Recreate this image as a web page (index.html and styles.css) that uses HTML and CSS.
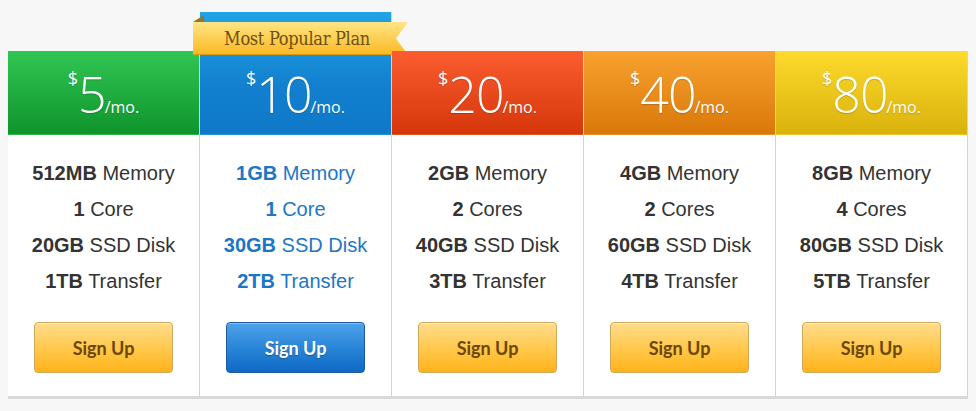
FILE: index.html
```html
<!DOCTYPE html>
<html lang="en">
<head>
  <meta charset="UTF-8" />
  <title>Plans</title>
  <link rel="stylesheet" href="styles.css">
</head>
<body>
  <div class="pricing">
    <div class="plan plan-green">
      <div class="plan-head">
        <span class="price"><span class="cur">$</span><span class="amount">5</span><span class="per">/mo.</span></span>
      </div>
      <ul class="plan-features">
        <li><b>512MB</b> Memory</li>
        <li><b>1</b> Core</li>
        <li><b>20GB</b> SSD Disk</li>
        <li><b>1TB</b> Transfer</li>
      </ul>
      <div class="plan-foot"><a class="btn" href="#">Sign Up</a></div>
    </div>

    <div class="plan plan-blue popular">
      <div class="ribbon">
        <svg class="ribbon-shape" width="216" height="42" viewBox="0 0 216 42">
          <defs>
            <linearGradient id="ribbon-fill" x1="0" y1="0" x2="0" y2="1">
              <stop offset="0" stop-color="#ffe585" />
              <stop offset="1" stop-color="#fbb820" />
            </linearGradient>
          </defs>
          <polygon points="0,8 11,1 11,8" fill="#94762a" />
          <polygon points="0,8 215,8 203,24.5 215,41 0,41" fill="url(#ribbon-fill)" />
          <polyline points="0,40.5 215,40.5" stroke="#d99c14" stroke-width="1" />
        </svg>
        <span class="ribbon-text">Most Popular Plan</span>
      </div>
      <div class="plan-head">
        <span class="price"><span class="cur">$</span><span class="amount">10</span><span class="per">/mo.</span></span>
      </div>
      <ul class="plan-features">
        <li><b>1GB</b> Memory</li>
        <li><b>1</b> Core</li>
        <li><b>30GB</b> SSD Disk</li>
        <li><b>2TB</b> Transfer</li>
      </ul>
      <div class="plan-foot"><a class="btn btn-blue" href="#">Sign Up</a></div>
    </div>

    <div class="plan plan-red">
      <div class="plan-head">
        <span class="price"><span class="cur">$</span><span class="amount">20</span><span class="per">/mo.</span></span>
      </div>
      <ul class="plan-features">
        <li><b>2GB</b> Memory</li>
        <li><b>2</b> Cores</li>
        <li><b>40GB</b> SSD Disk</li>
        <li><b>3TB</b> Transfer</li>
      </ul>
      <div class="plan-foot"><a class="btn" href="#">Sign Up</a></div>
    </div>

    <div class="plan plan-orange">
      <div class="plan-head">
        <span class="price"><span class="cur">$</span><span class="amount">40</span><span class="per">/mo.</span></span>
      </div>
      <ul class="plan-features">
        <li><b>4GB</b> Memory</li>
        <li><b>2</b> Cores</li>
        <li><b>60GB</b> SSD Disk</li>
        <li><b>4TB</b> Transfer</li>
      </ul>
      <div class="plan-foot"><a class="btn" href="#">Sign Up</a></div>
    </div>

    <div class="plan plan-yellow">
      <div class="plan-head">
        <span class="price"><span class="cur">$</span><span class="amount">80</span><span class="per">/mo.</span></span>
      </div>
      <ul class="plan-features">
        <li><b>8GB</b> Memory</li>
        <li><b>4</b> Cores</li>
        <li><b>80GB</b> SSD Disk</li>
        <li><b>5TB</b> Transfer</li>
      </ul>
      <div class="plan-foot"><a class="btn" href="#">Sign Up</a></div>
    </div>
  </div>
</body>
</html>
```

FILE: styles.css
```css
body {
  margin: 0;
  background: #f7f7f7;
  font-family: "Liberation Sans", Arial, sans-serif;
}

.pricing {
  display: flex;
  align-items: flex-end;
  padding: 12px 0 0 8px;
}

.plan {
  position: relative;
  width: 191px;
  background: #fff;
  border-right: 1px solid #d3d3d3;
  border-bottom: 3px solid #d9d9d9;
}

.plan-head {
  height: 84px;
  box-sizing: border-box;
  padding-top: 18px;
  text-align: center;
  color: #fff;
  border-bottom: 1px solid rgba(0, 0, 0, 0.08);
}

.popular .plan-head {
  height: 123px;
  padding-top: 57px;
}

.plan-green .plan-head { background: linear-gradient(#31c654, #0f942b); }
.plan-blue .plan-head { background: linear-gradient(#22a4e5, #1280cf 60%, #0f78c9); }
.plan-red .plan-head { background: linear-gradient(#fb5c30, #d5370a); }
.plan-orange .plan-head { background: linear-gradient(#f8a22f, #d9780a); }
.plan-yellow .plan-head { background: linear-gradient(#fddb2c, #d9b10c); }

.price {
  font-family: "Open Sans", sans-serif;
  font-weight: 300;
  font-size: 50px;
  line-height: 1;
  letter-spacing: -1px;
  text-shadow: 0 1px 1px rgba(0, 0, 0, 0.18);
}

.cur {
  font-size: 18px;
  font-weight: 400;
  vertical-align: top;
  margin-right: 1px;
}

.per {
  font-size: 16px;
  font-weight: 400;
  letter-spacing: 0;
  margin-left: -1px;
}

.plan-features {
  list-style: none;
  margin: 0;
  padding: 20px 0 0;
  text-align: center;
  font-size: 20px;
  line-height: 36px;
  color: #333;
}

.plan-blue .plan-features {
  color: #1b77c6;
}

.plan-foot {
  padding: 23px 0 23px;
}

.btn {
  display: block;
  width: 139px;
  height: 51px;
  box-sizing: border-box;
  margin: 0 auto;
  border: 1px solid #d0a85a;
  border-radius: 4px;
  background: linear-gradient(#ffdd8c, #ffc74a 55%, #ffb31a);
  font-family: Lato, sans-serif;
  font-weight: 700;
  font-size: 18px;
  line-height: 50px;
  text-align: center;
  color: #6b4704;
  text-decoration: none;
  box-shadow: inset 0 1px 0 rgba(255, 255, 255, 0.5);
}

.btn-blue {
  border-color: #1c5c9c;
  background: linear-gradient(#4ea2ea, #2a86d8 50%, #0e69c4);
  color: #fff;
  text-shadow: 0 1px 1px rgba(0, 0, 0, 0.3);
  box-shadow: inset 0 1px 0 rgba(255, 255, 255, 0.3);
}

/* ribbon sits over the blue tab and spills past the column */
.ribbon {
  position: absolute;
  top: 2px;
  left: -7px;
  width: 216px;
  height: 42px;
  box-sizing: border-box;
  padding: 8px 8px 0 0;
  text-align: center;
}

.ribbon-shape {
  position: absolute;
  top: 0;
  left: 0;
}

.ribbon-text {
  position: relative;
  display: block;
  font-family: "DejaVu Serif", serif;
  font-stretch: condensed;
  font-size: 18px;
  line-height: 33px;
  color: #6e5013;
  letter-spacing: -0.3px;
}
```
